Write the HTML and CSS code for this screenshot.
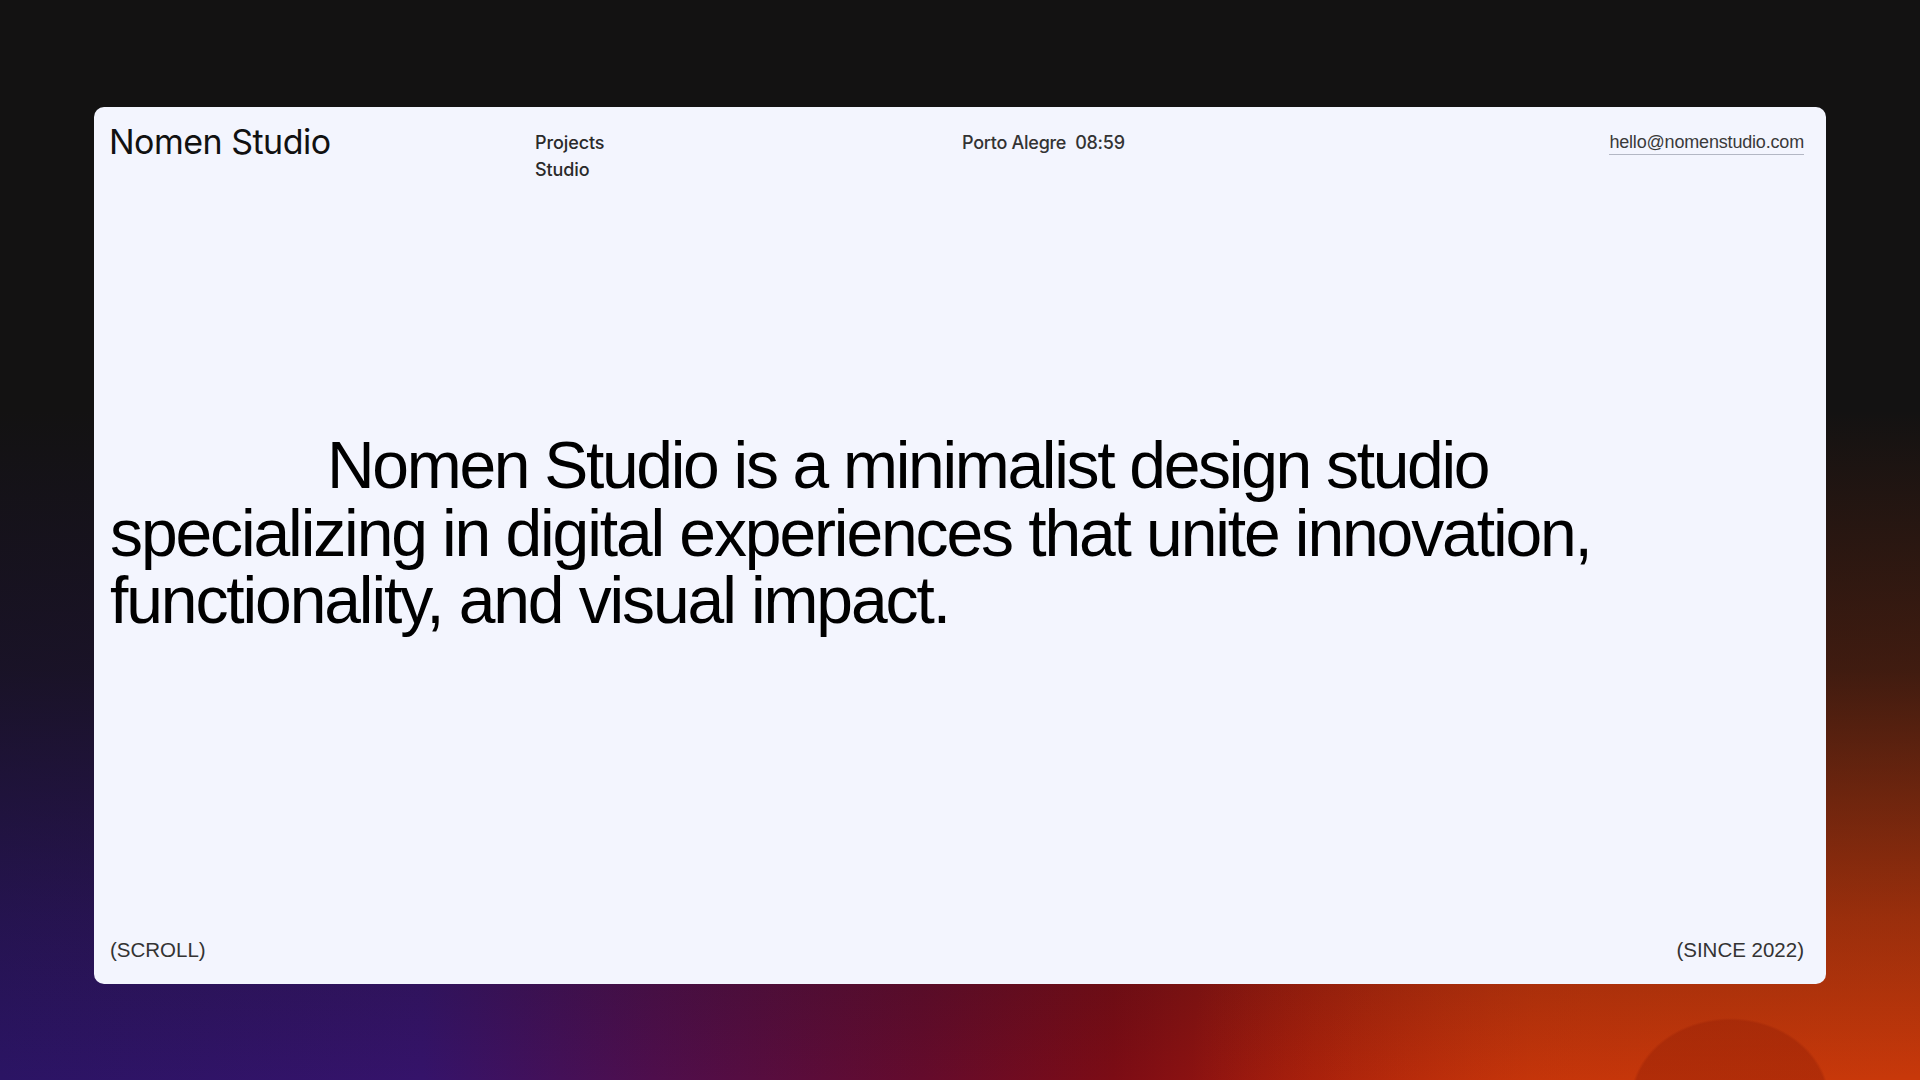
FILE: index.html
```html
<!DOCTYPE html>
<html lang="en">
<head>
<meta charset="utf-8">
<title>Nomen Studio</title>
<link rel="stylesheet" href="styles.css">
</head>
<body>
<div class="stage">
  <main class="card">
    <header class="topbar">
      <div class="logo">Nomen Studio</div>
      <nav class="nav">
        <a href="#">Projects</a>
        <a href="#">Studio</a>
      </nav>
      <div class="place"><span>Porto Alegre</span><span class="time">08:59</span></div>
      <div class="contact"><a href="#" class="mail">hello@nomenstudio.com</a></div>
    </header>
    <section class="intro">
      <p class="statement">Nomen Studio is a minimalist design studio specializing in digital experiences that unite innovation, functionality, and visual impact.</p>
    </section>
    <footer class="bottombar">
      <span>(SCROLL)</span>
      <span>(SINCE 2022)</span>
    </footer>
  </main>
</div>
</body>
</html>
```
FILE: styles.css
```css
* { box-sizing: border-box; }
html, body { margin: 0; padding: 0; }
body {
  width: 1920px;
  height: 1080px;
  overflow: hidden;
  background:
    radial-gradient(ellipse 100px 84px at 1730px 1102px, rgba(150,32,6,0.45) 0%, rgba(150,32,6,0.45) 97%, rgba(150,32,6,0) 100%),
    linear-gradient(to bottom, #131212 0%, #131212 38%, rgba(19,18,18,0.75) 62%, rgba(19,18,18,0.25) 85%, rgba(19,18,18,0) 100%),
    radial-gradient(ellipse 38% 55% at 100% 100%, #c8380a 0%, rgba(200,56,10,0.6) 50%, rgba(200,56,10,0) 100%),
    linear-gradient(to right, #2b1464 0%, #35136a 22%, #4e0e4c 34%, #640b2c 48%, #7c0c15 58%, #a01a0c 68%, #c0300a 80%, #c4380a 100%);
  font-family: "Liberation Sans", Arial, sans-serif;
}
.stage {
  padding: 107px 94px 96px 94px;
  height: 1080px;
}
.card {
  height: 877px;
  background: #f3f5fe;
  border-radius: 10px;
  padding: 18px 22px 23px 16px;
  display: flex;
  flex-direction: column;
}
.topbar {
  display: grid;
  grid-template-columns: 424px 428px 1fr auto;
  align-items: start;
}
.logo {
  font-family: Inter, "Noto Sans", sans-serif;
  font-size: 34px;
  line-height: 34px;
  font-weight: 400;
  letter-spacing: -0.015em;
  color: #111;
  margin-left: -1px;
}
.nav {
  display: flex;
  flex-direction: column;
  padding-top: 4px;
  margin-left: 1px;
}
.nav a, .place {
  font-family: Inter, "Noto Sans", sans-serif;
  font-size: 18px;
  line-height: 27px;
  font-weight: 500;
  letter-spacing: -0.005em;
  color: #2a2a2a;
  text-decoration: none;
}
.place {
  padding-top: 4px;
  font-weight: 450;
  letter-spacing: -0.015em;
  color: #333;
}
.place .time { margin-left: 9px; }
.contact { padding-top: 7px; }
.mail {
  font-size: 18px;
  line-height: 21px;
  color: #3a3a3a;
  text-decoration: none;
  letter-spacing: -0.01em;
  border-bottom: 1px solid #b3b7c4;
  padding-bottom: 1px;
  display: inline-block;
}
.intro {
  margin: auto 0;
  padding-bottom: 54px;
}
.statement {
  margin: 0;
  font-size: 66px;
  line-height: 67.5px;
  letter-spacing: -0.032em;
  color: #000;
  text-indent: 217px;
  max-width: 1500px;
}
.statement::first-line {
  letter-spacing: -0.035em;
}
.bottombar {
  display: flex;
  justify-content: space-between;
  font-size: 20.5px;
  line-height: 23px;
  color: #333;
}
```
